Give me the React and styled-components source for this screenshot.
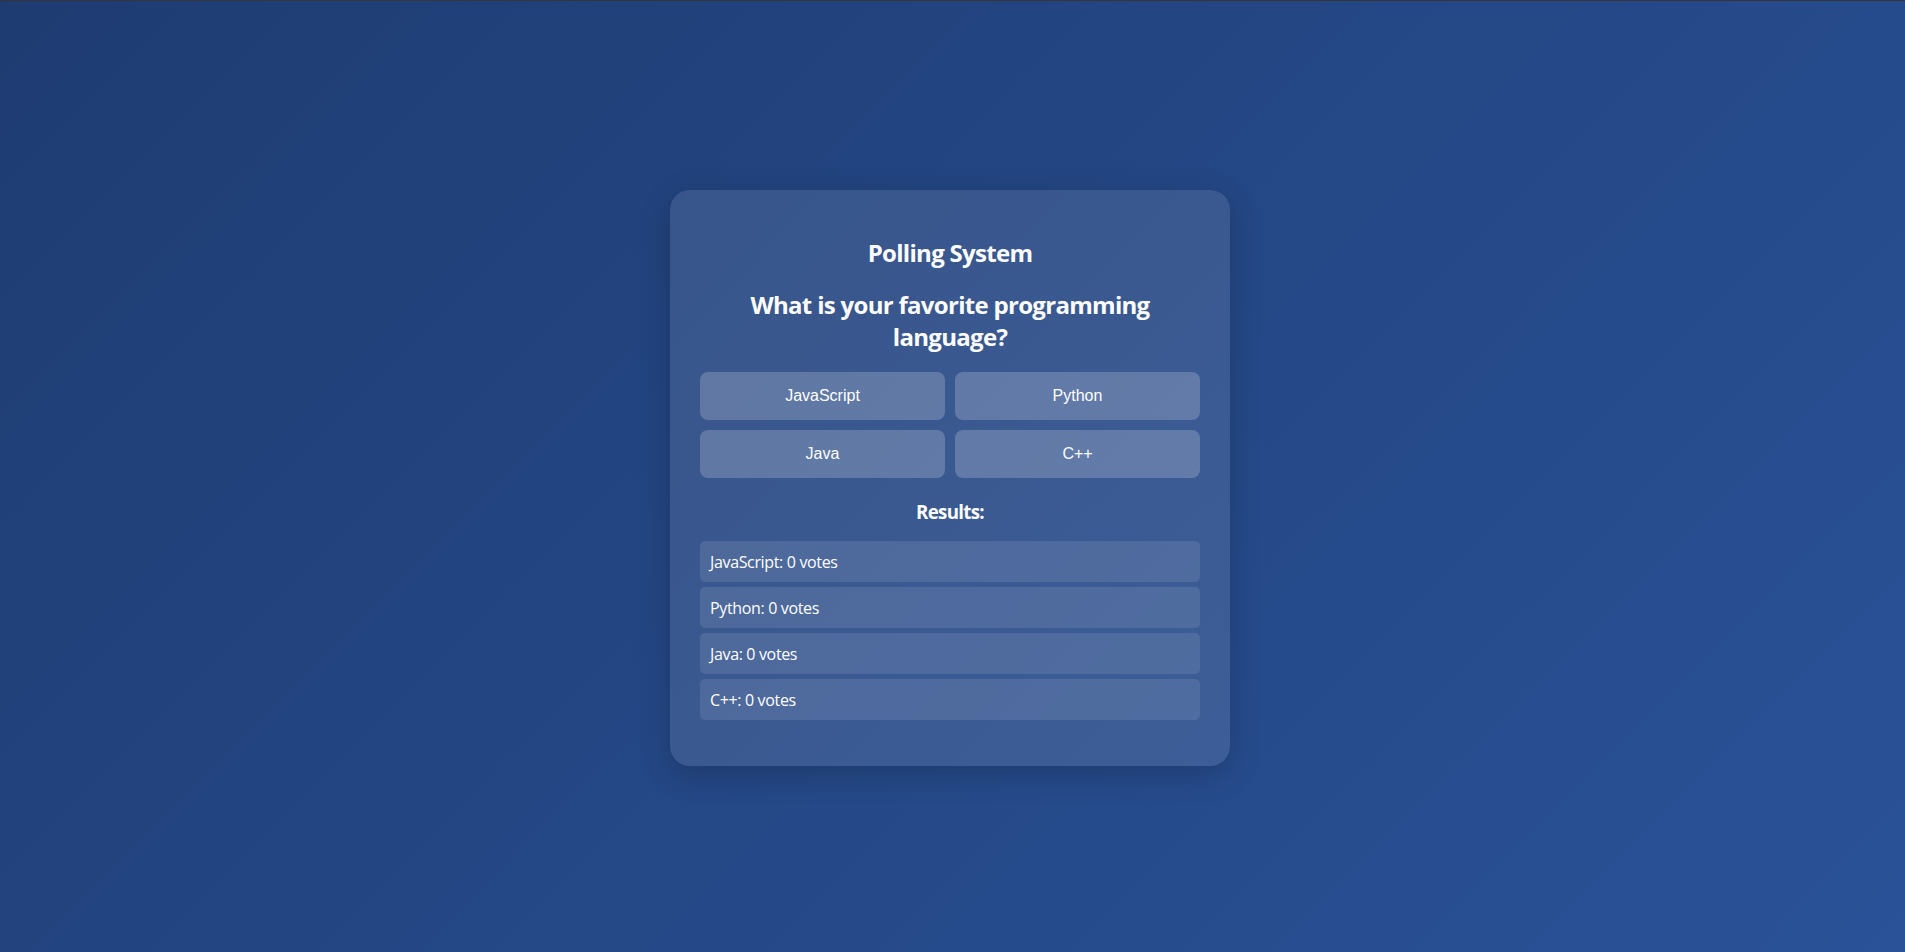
import React, { useState } from "react";
import styled, { createGlobalStyle } from "styled-components";

const GlobalStyle = createGlobalStyle`
  * {
    box-sizing: border-box;
  }
  html, body {
    margin: 0;
    padding: 0;
  }
  body {
    font-family: "Segoe UI", "Open Sans", sans-serif;
    background: linear-gradient(135deg, #1e3c72, #2a5298);
    color: #fff;
    min-height: 100vh;
    border-top: 1px solid #34363c;
  }
`;

const Page = styled.main`
  min-height: calc(100vh - 1px);
  padding: 3px 5px 0 0;
  display: flex;
  align-items: center;
  justify-content: center;
`;

const Card = styled.section`
  width: 560px;
  padding: 30px 30px 46px;
  border-radius: 20px;
  background: rgba(255, 255, 255, 0.1);
  box-shadow: 0 8px 32px rgba(0, 0, 0, 0.2);
  text-align: center;
`;

const Title = styled.h1`
  margin: 17px 0 0;
  font-size: 24px;
  line-height: 32px;
  font-weight: 700;
  letter-spacing: -0.7px;
`;

const Question = styled.h2`
  margin: 20px 0 0;
  font-size: 24px;
  line-height: 32px;
  font-weight: 700;
  letter-spacing: -0.7px;
`;

const Options = styled.div`
  margin-top: 19px;
  display: grid;
  grid-template-columns: 1fr 1fr;
  gap: 10px;
`;

const OptionButton = styled.button`
  height: 48px;
  border: none;
  border-radius: 8px;
  background: rgba(255, 255, 255, 0.2);
  color: #fff;
  font-family: "Liberation Sans", Arial, sans-serif;
  font-size: 16px;
  cursor: pointer;

  &:hover {
    background: rgba(255, 255, 255, 0.3);
  }
`;

const ResultsTitle = styled.h3`
  margin: 22px 0 0;
  font-size: 18.72px;
  line-height: 24px;
  font-weight: 700;
  letter-spacing: -0.7px;
`;

const ResultList = styled.ul`
  list-style: none;
  margin: 17px 0 0;
  padding: 0;
  display: flex;
  flex-direction: column;
  gap: 5px;
  text-align: left;
`;

const ResultItem = styled.li`
  height: 41px;
  display: flex;
  align-items: center;
  padding: 0 10px;
  border-radius: 5px;
  background: rgba(255, 255, 255, 0.1);
  font-size: 16px;
  letter-spacing: -0.35px;
`;

const LANGS = ["JavaScript", "Python", "Java", "C++"];

export default function App() {
  const [votes, setVotes] = useState({ JavaScript: 0, Python: 0, Java: 0, "C++": 0 });

  const vote = (lang) => setVotes((v) => ({ ...v, [lang]: v[lang] + 1 }));

  return (
    <>
      <GlobalStyle />
      <Page>
        <Card>
          <Title>Polling System</Title>
          <Question>What is your favorite programming language?</Question>
          <Options>
            {LANGS.map((lang) => (
              <OptionButton key={lang} onClick={() => vote(lang)}>
                {lang}
              </OptionButton>
            ))}
          </Options>
          <ResultsTitle>Results:</ResultsTitle>
          <ResultList>
            {LANGS.map((lang) => (
              <ResultItem key={lang}>
                {lang}: {votes[lang]} votes
              </ResultItem>
            ))}
          </ResultList>
        </Card>
      </Page>
    </>
  );
}
